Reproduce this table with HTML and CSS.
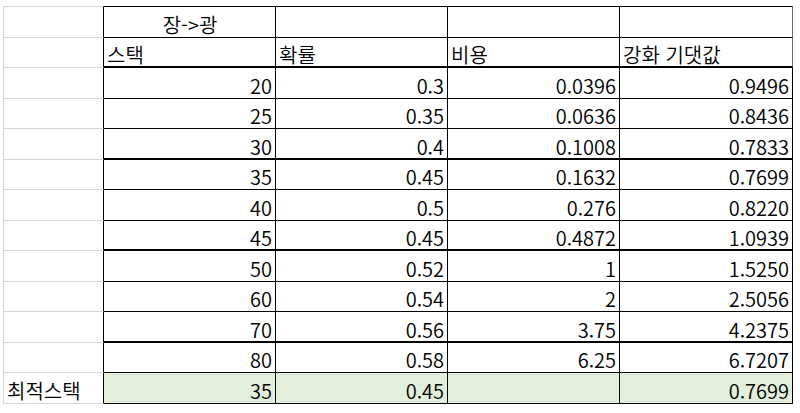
FILE: index.html
```html
<!DOCTYPE html>
<html lang="ko">
<head>
<meta charset="utf-8">
<title>장->광</title>
<link rel="stylesheet" href="styles.css">
</head>
<body>
<div class="sheet">
  <div class="c a top"></div>
  <div class="c top center">장-&gt;광</div>
  <div class="c top"></div>
  <div class="c top"></div>
  <div class="c top last-h"></div>

  <div class="c a"></div>
  <div class="c left thick">스택</div>
  <div class="c left thick">확률</div>
  <div class="c left thick">비용</div>
  <div class="c left thick last-h">강화 기댓값</div>

  <div class="c a"></div><div class="c">20</div><div class="c">0.3</div><div class="c">0.0396</div><div class="c">0.9496</div>
  <div class="c a"></div><div class="c">25</div><div class="c">0.35</div><div class="c">0.0636</div><div class="c">0.8436</div>
  <div class="c a"></div><div class="c thick">30</div><div class="c thick">0.4</div><div class="c thick">0.1008</div><div class="c thick">0.7833</div>
  <div class="c a"></div><div class="c">35</div><div class="c">0.45</div><div class="c">0.1632</div><div class="c">0.7699</div>
  <div class="c a"></div><div class="c">40</div><div class="c">0.5</div><div class="c">0.276</div><div class="c">0.8220</div>
  <div class="c a"></div><div class="c thick">45</div><div class="c thick">0.45</div><div class="c thick">0.4872</div><div class="c thick">1.0939</div>
  <div class="c a"></div><div class="c">50</div><div class="c">0.52</div><div class="c">1</div><div class="c">1.5250</div>
  <div class="c a"></div><div class="c">60</div><div class="c">0.54</div><div class="c">2</div><div class="c">2.5056</div>
  <div class="c a"></div><div class="c thick">70</div><div class="c thick">0.56</div><div class="c thick">3.75</div><div class="c thick">4.2375</div>
  <div class="c a"></div><div class="c">80</div><div class="c">0.58</div><div class="c">6.25</div><div class="c">6.7207</div>

  <div class="c a left">최적스택</div>
  <div class="c best">35</div>
  <div class="c best">0.45</div>
  <div class="c best"></div>
  <div class="c best">0.7699</div>
</div>
</body>
</html>
```

FILE: styles.css
```css
html, body {
  margin: 0;
  padding: 0;
  background: #ffffff;
}

body {
  font-family: "Noto Sans CJK KR", "Noto Sans", sans-serif;
  font-size: 20px;
  font-weight: 350;
  color: #000000;
}

.sheet {
  display: grid;
  grid-template-columns: 101px 172px 172px 172px 173px;
  grid-template-rows: 32px 30px 31px 30px 31px 30px 31px 30px 31px 30px 31px 30px 31px;
  margin: 6px 0 0 3px;
  width: max-content;
}

.c {
  display: flex;
  align-items: flex-end;
  justify-content: flex-end;
  padding: 0 3px 0 4px;
  line-height: 24px;
  border-right: 1px solid #000000;
  border-bottom: 1px solid #000000;
  white-space: nowrap;
  overflow: hidden;
}

.thick {
  border-bottom-width: 2px;
  line-height: 23px;
}

.top {
  border-top: 1px solid #000000;
}

.a {
  border-left: 1px solid #d4d4d4;
  border-bottom-color: #d4d4d4;
}

.a.top {
  border-top-color: #d4d4d4;
}

.center {
  justify-content: center;
}

.left {
  justify-content: flex-start;
  padding-left: 3px;
}

.last-h {
  border-right-color: #6e6e6e;
}

.best {
  background: #e2efda;
}
```
